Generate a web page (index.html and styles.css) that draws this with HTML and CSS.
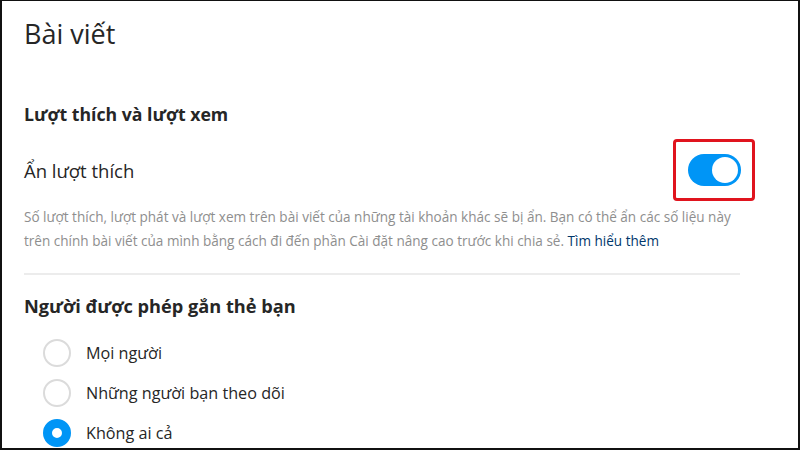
FILE: index.html
```html
<!DOCTYPE html>
<html lang="vi">
<head>
<meta charset="utf-8">
<link rel="stylesheet" href="styles.css">
</head>
<body>
<div class="frame">
  <main class="page">
    <h1 class="title">Bài viết</h1>
    <section class="likes">
      <h2 class="section-title">Lượt thích và lượt xem</h2>
      <div class="setting-row">
        <span class="setting-label">Ẩn lượt thích</span>
        <div class="highlight">
          <div class="toggle"><span class="knob"></span></div>
        </div>
      </div>
      <p class="desc">Số lượt thích, lượt phát và lượt xem trên bài viết của những tài khoản khác sẽ bị ẩn. Bạn có thể ẩn các số liệu này trên chính bài viết của mình bằng cách đi đến phần Cài đặt nâng cao trước khi chia sẻ. <a class="link" href="#">Tìm hiểu thêm</a></p>
    </section>
    <hr class="divider">
    <section class="tags">
      <h2 class="section-title tag-title">Người được phép gắn thẻ bạn</h2>
      <ul class="radios">
        <li class="radio-row"><span class="radio"></span><span class="radio-label">Mọi người</span></li>
        <li class="radio-row"><span class="radio"></span><span class="radio-label">Những người bạn theo dõi</span></li>
        <li class="radio-row"><span class="radio checked"></span><span class="radio-label">Không ai cả</span></li>
      </ul>
    </section>
  </main>
</div>
</body>
</html>
```

FILE: styles.css
```css
* { box-sizing: border-box; }
html, body { margin: 0; padding: 0; background: #fff; }
body {
  font-family: "Open Sans", "Noto Sans", "Liberation Sans", sans-serif;
  color: #262626;
}
.frame {
  width: 800px;
  height: 450px;
  border-top: 1px solid #111;
  border-left: 2px solid #111;
  border-right: 2px solid #111;
  border-bottom: 2px solid #111;
  overflow: hidden;
  background: #fff;
}
.page {
  padding: 0 0 0 22px;
  width: 740px;
}
.title {
  margin: 0;
  padding-top: 14px;
  font-size: 27px;
  font-weight: 400;
  line-height: 38px;
  color: #262626;
}
.section-title {
  margin: 0;
  font-size: 17.7px;
  font-weight: 700;
  color: #262626;
}
.likes .section-title {
  margin-top: 48px;
  line-height: 26px;
}
.setting-row {
  display: flex;
  align-items: center;
  justify-content: space-between;
  margin-top: 12px;
  height: 62px;
  margin-right: -13px;
}
.setting-label {
  font-size: 18.5px;
  color: #262626;
}
.highlight {
  width: 82px;
  height: 62px;
  border: 3px solid #e0141e;
  border-radius: 4px;
  display: flex;
  align-items: center;
  justify-content: center;
}
.toggle {
  width: 53px;
  height: 32px;
  border-radius: 16px;
  background: #0095f6;
  display: flex;
  align-items: center;
  justify-content: flex-end;
  padding-right: 3px;
}
.knob {
  width: 26px;
  height: 26px;
  border-radius: 50%;
  background: #fff;
}
.desc {
  margin: 4px 0 0;
  font-size: 13.55px;
  line-height: 24px;
  color: #8e8e8e;
}
.link {
  color: #00376b;
  text-decoration: none;
}
.divider {
  margin: 20px 0 0;
  border: 0;
  border-top: 2px solid #ececec;
  width: 716px;
}
.tag-title {
  margin-top: 18px;
  line-height: 26px;
  font-size: 18.2px;
}
.radios {
  list-style: none;
  margin: 14px 0 0;
  padding: 0 0 0 19px;
}
.radio-row {
  display: flex;
  align-items: center;
  height: 40px;
}
.radio {
  width: 28px;
  height: 28px;
  border-radius: 50%;
  border: 2px solid #dbdbdb;
  flex: none;
}
.radio.checked {
  border: 9px solid #0095f6;
  background: #fff;
}
.radio-label {
  margin-left: 15px;
  font-size: 16.2px;
  color: #262626;
}
```
